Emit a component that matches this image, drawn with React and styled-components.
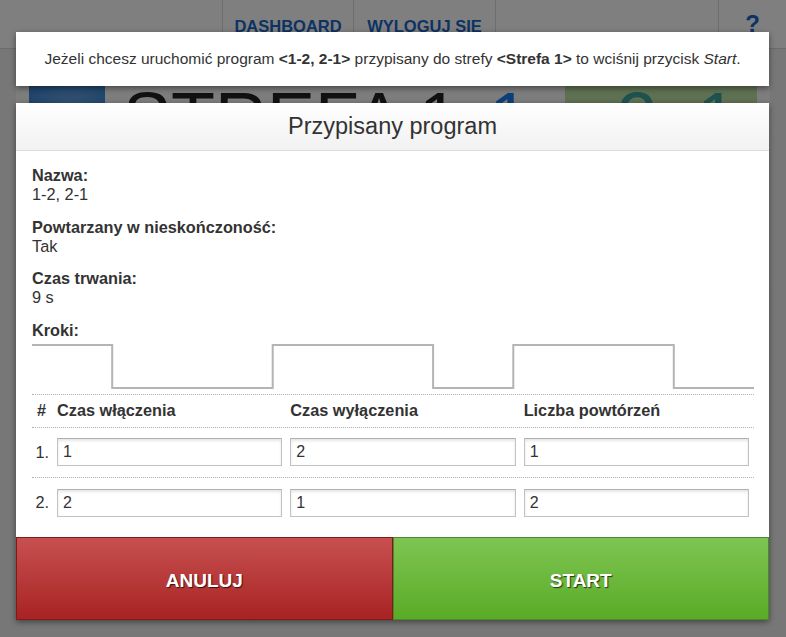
import React from "react";
import styled, { createGlobalStyle } from "styled-components";

const GlobalStyle = createGlobalStyle`
  html, body {
    margin: 0;
    padding: 0;
    background: #eeeeee;
    font-family: "Liberation Sans", Arial, sans-serif;
    overflow: hidden;
  }
`;

const steps = [
  { on: 1, off: 2, reps: 1 },
  { on: 2, off: 1, reps: 2 },
];

const Page = styled.div`
  width: 786px;
  height: 637px;
  position: relative;
  overflow: hidden;
`;

const TopBar = styled.div`
  display: grid;
  grid-template-columns: 222px 131px 142px 223px 1fr;
  height: 48px;
  background: #ffffff;
  border-bottom: 1px solid #d8d8d8;
`;

const NavItem = styled.div`
  border-left: ${(p) => (p.$first ? "none" : "1px solid #dddddd")};
  display: flex;
  align-items: flex-end;
  justify-content: center;
  padding-bottom: ${(p) => (p.$big ? "10px" : "12px")};
  font-weight: bold;
  font-size: ${(p) => (p.$big ? "24px" : "16.5px")};
  color: #1a66c8;
`;

const ZonePanel = styled.div`
  margin: 10px 16px 0;
  background: #fbfbfb;
  height: 200px;
  display: flex;
  padding: 23px 13px 0;
  gap: 18px;
  overflow: hidden;
`;

const ZoneIcon = styled.div`
  width: 76px;
  height: 76px;
  margin-top: 2px;
  background: radial-gradient(circle at 55% 40%, #6aa6e6, #2f7fd0);
  flex: none;
`;

const ZoneName = styled.div`
  flex: 1;
  font-size: 72px;
  line-height: 1;
  color: #222;
  white-space: nowrap;
  display: flex;
  gap: 30px;
  overflow: hidden;
`;

const Blue = styled.span`
  color: #1a80f0;
`;

const ZoneBox = styled.div`
  background: #bde2a4;
  color: #3da4a0;
  width: 192px;
  flex: none;
  font-size: 72px;
  line-height: 1;
  padding-left: 52px;
  box-sizing: border-box;
  white-space: nowrap;
`;

const Overlay = styled.div`
  position: absolute;
  inset: 0;
  background: rgba(0, 0, 0, 0.5);
`;

const Notice = styled.div`
  position: absolute;
  top: 32px;
  left: 16px;
  width: 753px;
  height: 54px;
  background: #fff;
  box-shadow: 0 2px 6px rgba(0, 0, 0, 0.45);
  display: flex;
  align-items: center;
  justify-content: center;
  font-size: 15.5px;
  color: #333;
`;

const Modal = styled.div`
  position: absolute;
  top: 103px;
  left: 16px;
  width: 753px;
  background: #fff;
  box-shadow: 0 2px 6px rgba(0, 0, 0, 0.45);
  display: flex;
  flex-direction: column;
`;

const ModalHeader = styled.div`
  height: 47px;
  background: linear-gradient(#ffffff, #f1f1f1);
  border-bottom: 1px solid #dddddd;
  display: flex;
  align-items: center;
  justify-content: center;
  font-size: 23.5px;
  color: #333;
`;

const ModalBody = styled.div`
  padding: 15px 15px 9px 16px;
  color: #333;
  font-size: 16.3px;
`;

const Field = styled.div`
  line-height: 19px;
  margin-bottom: ${(p) => (p.$tight ? "4px" : "13.5px")};
`;

const Label = styled.div`
  font-weight: bold;
`;

const Wave = styled.svg`
  display: block;
  width: 722px;
  height: 46px;
  border-bottom: 1px dotted #b0b0b0;
  padding-bottom: 4px;
`;

const Row = styled.div`
  display: grid;
  grid-template-columns: 17px repeat(3, 1fr);
  column-gap: 8px;
  align-items: center;
  height: ${(p) => (p.$head ? "33px" : "50px")};
  padding-right: 5px;
  border-bottom: ${(p) => (p.$last ? "none" : "1px dotted #b0b0b0")};
  font-weight: ${(p) => (p.$head ? "bold" : "normal")};
  width: 722px;
  box-sizing: border-box;
`;

const Num = styled.div`
  text-align: ${(p) => (p.$head ? "left" : "right")};
  padding-left: ${(p) => (p.$head ? "5px" : "0")};
  white-space: nowrap;
`;

const Input = styled.input`
  height: 28px;
  box-sizing: border-box;
  border: 1px solid #c2c2c2;
  border-top-color: #b0b0b0;
  box-shadow: inset 0 2px 3px rgba(0, 0, 0, 0.1);
  font-family: "Liberation Sans", Arial, sans-serif;
  font-size: 16px;
  color: #333;
  padding: 0 5px;
  width: 100%;
  outline: none;
`;

const Actions = styled.div`
  display: grid;
  grid-template-columns: 1fr 1fr;
  height: 83px;
`;

const Button = styled.button`
  border: 1px solid ${(p) => (p.$ok ? "#4b8a2c" : "#7e1a1a")};
  background: ${(p) =>
    p.$ok
      ? "linear-gradient(#7ec553, #5aab26)"
      : "linear-gradient(#c85050, #a82323)"};
  color: #fff;
  font-family: "Liberation Sans", Arial, sans-serif;
  font-weight: bold;
  font-size: 19px;
  padding-top: 6px;
  text-shadow: 1px 1px 1px rgba(0, 0, 0, 0.7);
  cursor: pointer;
`;

function wavePoints(list, width, height) {
  const total = list.reduce((s, st) => s + (st.on + st.off) * st.reps, 0);
  const k = width / total;
  const hi = 1;
  const lo = height - 2;
  let x = 0;
  const pts = [[0, hi]];
  list.forEach((st) => {
    for (let i = 0; i < st.reps; i++) {
      x += st.on * k;
      pts.push([x, hi], [x, lo]);
      x += st.off * k;
      pts.push([x, lo]);
      if (x < width - 0.5) pts.push([x, hi]);
    }
  });
  return pts.map((p) => p.map((v) => v.toFixed(1)).join(",")).join(" ");
}

export default function App() {
  return (
    <Page>
      <GlobalStyle />
      <TopBar>
        <NavItem $first />
        <NavItem>DASHBOARD</NavItem>
        <NavItem>WYLOGUJ SIE</NavItem>
        <NavItem />
        <NavItem $big>?</NavItem>
      </TopBar>
      <ZonePanel>
        <ZoneIcon />
        <ZoneName>
          <span>STREFA 1</span>
          <Blue>1</Blue>
          <Blue>2</Blue>
        </ZoneName>
        <ZoneBox>2&nbsp;&nbsp;1</ZoneBox>
      </ZonePanel>

      <Overlay />

      <Notice>
        <span>
          Jeżeli chcesz uruchomić program <b>&lt;1-2, 2-1&gt;</b> przypisany do
          strefy <b>&lt;Strefa 1&gt;</b> to wciśnij przycisk <i>Start</i>.
        </span>
      </Notice>

      <Modal>
        <ModalHeader>Przypisany program</ModalHeader>
        <ModalBody>
          <Field>
            <Label>Nazwa:</Label>
            <div>1-2, 2-1</div>
          </Field>
          <Field>
            <Label>Powtarzany w nieskończoność:</Label>
            <div>Tak</div>
          </Field>
          <Field>
            <Label>Czas trwania:</Label>
            <div>9 s</div>
          </Field>
          <Field $tight>
            <Label>Kroki:</Label>
          </Field>
          <Wave viewBox="0 0 722 46">
            <polyline
              points={wavePoints(steps, 722, 46)}
              fill="none"
              stroke="#b4b4b4"
              strokeWidth="2"
            />
          </Wave>
          <Row $head>
            <Num $head>#</Num>
            <div>Czas włączenia</div>
            <div>Czas wyłączenia</div>
            <div>Liczba powtórzeń</div>
          </Row>
          {steps.map((st, i) => (
            <Row key={i} $last={i === steps.length - 1}>
              <Num>{i + 1}.</Num>
              <Input defaultValue={st.on} />
              <Input defaultValue={st.off} />
              <Input defaultValue={st.reps} />
            </Row>
          ))}
        </ModalBody>
        <Actions>
          <Button>ANULUJ</Button>
          <Button $ok>START</Button>
        </Actions>
      </Modal>
    </Page>
  );
}
